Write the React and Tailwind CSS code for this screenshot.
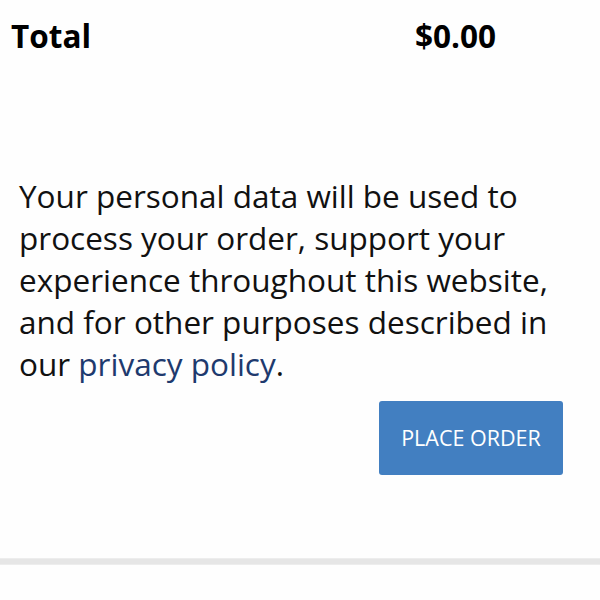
export default function App() {
  return (
    <div className="w-[600px] h-[600px] bg-[#fefefe] overflow-hidden" style={{ fontFamily: '"Open Sans", sans-serif' }}>
      <div className="flex pt-[20px]">
        <div className="w-[415px] pl-[11px] text-[31.5px] font-bold text-black leading-[32px]">Total</div>
        <div className="text-[31.5px] font-bold text-black leading-[32px]">$0.00</div>
      </div>
      <div className="pl-[19px] pr-[30px] mt-[123px]">
        <p className="text-[31.5px] leading-[42px] text-[#111]">
          Your personal data will be used to process your order, support your experience throughout this website, and for other purposes described in our <a className="text-[#1e3a6e]">privacy policy</a>.
        </p>
        <div className="flex justify-end mt-[16px] pr-[7px]">
          <button className="w-[184px] h-[74px] bg-[#427fc1] rounded-[3px] text-white text-[21.5px]">PLACE ORDER</button>
        </div>
      </div>
      <div className="mt-[83px] h-[7px] bg-[#e6e6e6] border-y border-[#ededed]"></div>
    </div>
  );
}
